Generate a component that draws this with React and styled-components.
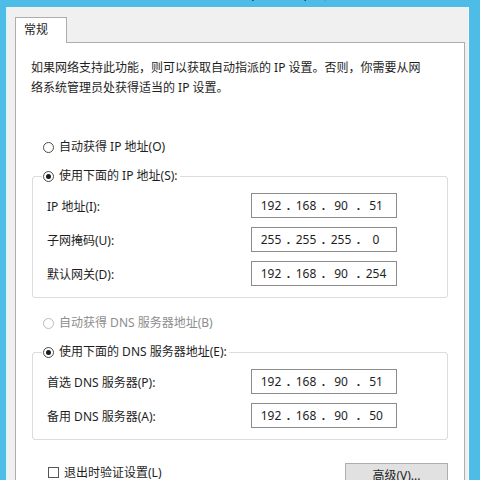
import React from "react";
import styled, { createGlobalStyle } from "styled-components";

const GlobalStyle = createGlobalStyle`
  html, body {
    margin: 0;
    padding: 0;
    background: #4dbde8;
  }

  * {
    box-sizing: border-box;
  }

  body {
    font-family: "Noto Sans", "Noto Sans CJK SC", sans-serif;
    font-size: 12px;
    color: #1e1e1e;
  }
`;

const ipRows = [
  { label: "IP 地址(I):", value: ["192", "168", "90", "51"] },
  { label: "子网掩码(U):", value: ["255", "255", "255", "0"] },
  { label: "默认网关(D):", value: ["192", "168", "90", "254"] },
];

const dnsRows = [
  { label: "首选 DNS 服务器(P):", value: ["192", "168", "90", "51"] },
  { label: "备用 DNS 服务器(A):", value: ["192", "168", "90", "50"] },
];

const IpField = ({ value }) => (
  <IpBox>
    {value.map((octet, i) => (
      <React.Fragment key={i}>
        {i > 0 && <Dot>.</Dot>}
        <Octet>{octet}</Octet>
      </React.Fragment>
    ))}
  </IpBox>
);

const FieldRows = ({ rows }) => (
  <Fields>
    {rows.map((row) => (
      <React.Fragment key={row.label}>
        <Label>{row.label}</Label>
        <IpField value={row.value} />
      </React.Fragment>
    ))}
  </Fields>
);

const App = () => {
  return (
    <Frame>
      <GlobalStyle />
      <TitleBar>
        <TitleText>Internet 协议版本 4 (TCP/IPv4) 属性</TitleText>
      </TitleBar>
      <Dialog>
        <TabStrip>
          <Tab>常规</Tab>
        </TabStrip>
        <Panel>
          <Intro>
            如果网络支持此功能，则可以获取自动指派的 IP 设置。否则，你需要从网
            <br />
            络系统管理员处获得适当的 IP 设置。
          </Intro>

          <RadioRow $top={39}>
            <Radio />
            自动获得 IP 地址(O)
          </RadioRow>
          <Group>
            <Legend>
              <RadioRow as="span">
                <Radio $checked />
                使用下面的 IP 地址(S):
              </RadioRow>
            </Legend>
            <FieldRows rows={ipRows} />
          </Group>

          <RadioRow $top={15} $disabled>
            <Radio $disabled />
            自动获得 DNS 服务器地址(B)
          </RadioRow>
          <Group>
            <Legend>
              <RadioRow as="span">
                <Radio $checked />
                使用下面的 DNS 服务器地址(E):
              </RadioRow>
            </Legend>
            <FieldRows rows={dnsRows} />
          </Group>

          <Footer>
            <CheckRow>
              <Check />
              退出时验证设置(L)
            </CheckRow>
            <Button>高级(V)...</Button>
          </Footer>
        </Panel>
      </Dialog>
    </Frame>
  );
};

export default App;

const Frame = styled.div`
  width: 480px;
  height: 480px;
  overflow: hidden;
  background: #4dbde8;
  padding: 0 11px 0 6px;
  display: flex;
  flex-direction: column;
`;

/* only the descenders of the caption peek out below the top edge */
const TitleBar = styled.div`
  height: 7px;
  flex: none;
  overflow: hidden;
  text-align: center;
`;

const TitleText = styled.div`
  margin-top: -11px;
  line-height: 12px;
  font-size: 12px;
  color: #111;
  white-space: nowrap;
`;

const Dialog = styled.div`
  flex: 1;
  display: flex;
  flex-direction: column;
  background: #f0f0f0;
  border-left: 2px solid #e3f2f9;
  border-right: 1px solid #f7fbfd;
  padding: 10px 3px 0 7px;
`;

const TabStrip = styled.div`
  display: flex;
`;

const Tab = styled.div`
  position: relative;
  z-index: 1;
  width: 52px;
  height: 26px;
  margin-bottom: -1px;
  padding: 3px 0 0 8px;
  line-height: 17px;
  background: #fff;
  border: 1px solid #adadad;
  border-bottom: none;
`;

const Panel = styled.div`
  flex: 1;
  background: #fff;
  border: 1px solid #adadad;
  padding: 15px 0 0 15px;
`;

const Intro = styled.p`
  margin: 0;
  line-height: 20px;
  white-space: nowrap;
`;

const RadioRow = styled.div`
  display: flex;
  align-items: center;
  gap: 5px;
  height: 20px;
  line-height: 20px;
  margin-top: ${(p) => (p.$top ? `${p.$top}px` : "0")};
  margin-left: ${(p) => (p.$top !== undefined ? "12px" : "0")};
  color: ${(p) => (p.$disabled ? "#8d8d8d" : "#1e1e1e")};
  white-space: nowrap;
`;

const Radio = styled.span`
  width: 11px;
  height: 11px;
  flex: none;
  border-radius: 50%;
  border: 1px solid ${(p) => (p.$disabled ? "#bdbdbd" : "#4a4a4a")};
  background: #fff;
  display: flex;
  align-items: center;
  justify-content: center;

  &::after {
    content: "";
    width: 5px;
    height: 5px;
    border-radius: 50%;
    background: ${(p) => (p.$checked ? "#1a1a1a" : "transparent")};
  }
`;

const Group = styled.fieldset`
  width: 416px;
  margin: 9px 0 0 1px;
  padding: 0;
  border: 1px solid #dcdcdc;
  border-radius: 3px;
`;

const Legend = styled.legend`
  margin-left: 9px;
  padding: 0 2px 0 1px;
  line-height: 20px;
`;

const Fields = styled.div`
  display: grid;
  grid-template-columns: 204px 146px;
  row-gap: 9px;
  align-items: center;
  padding: 7px 0 11px 14px;
`;

const Label = styled.span`
  white-space: nowrap;
`;

const IpBox = styled.div`
  width: 146px;
  height: 25px;
  display: flex;
  align-items: center;
  padding-left: 5px;
  background: #fff;
  border: 1px solid #8c8c8c;
`;

const Octet = styled.span`
  width: 28px;
  text-align: center;
`;

const Dot = styled.span`
  width: 7px;
  text-align: center;
  font-weight: 700;
`;

const Footer = styled.div`
  width: 417px;
  margin-top: 22px;
  display: flex;
  justify-content: space-between;
  align-items: flex-start;
`;

const CheckRow = styled.label`
  display: flex;
  align-items: center;
  gap: 5px;
  height: 20px;
  margin-left: 17px;
  white-space: nowrap;
`;

const Check = styled.span`
  width: 11px;
  height: 11px;
  flex: none;
  border: 1px solid #555;
  background: #fff;
`;

const Button = styled.div`
  width: 103px;
  height: 26px;
  margin-top: 1px;
  line-height: 24px;
  text-align: center;
  background: #e1e1e1;
  border: 1px solid #adadad;
`;
